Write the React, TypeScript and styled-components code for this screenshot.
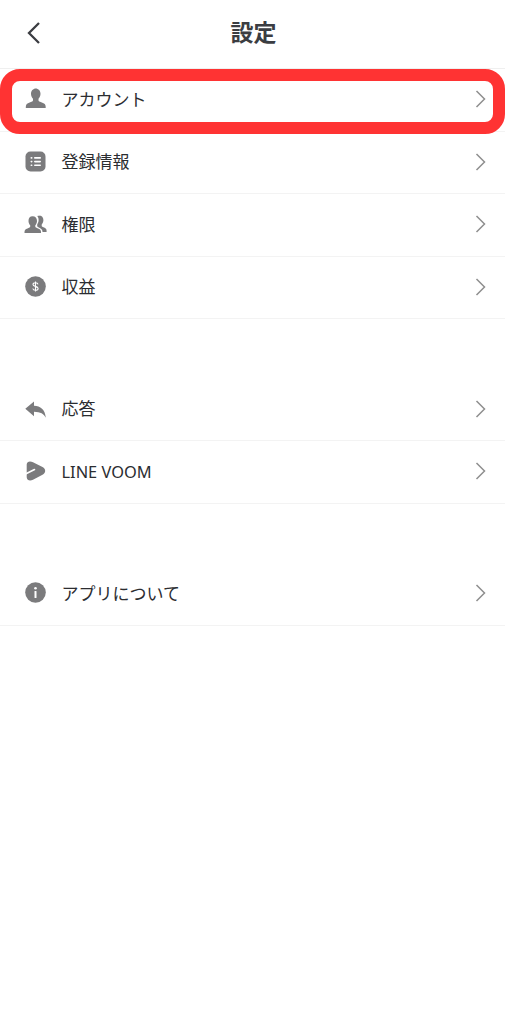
import React from "react";
import styled, { createGlobalStyle } from "styled-components";

const Global = createGlobalStyle`
  html, body { margin: 0; padding: 0; background: #fff; }
  body { font-family: "Noto Sans CJK JP", "Noto Sans", sans-serif; }
`;

const Page = styled.div`
  position: relative;
  width: 505px;
  height: 1024px;
  background: #fff;
  overflow: hidden;
`;

const Header = styled.header`
  position: relative;
  height: 69px;
  display: flex;
  align-items: center;
  justify-content: center;
  border-bottom: 1px solid #efefef;
  box-sizing: border-box;
`;

const BackButton = styled.svg`
  position: absolute;
  left: 26px;
  top: 21px;
  width: 16px;
  height: 24px;
`;

const Title = styled.h1`
  margin: -5px 0 0 2px;
  font-size: 23px;
  font-weight: 700;
  color: #3b3d42;
  line-height: 1;
`;

const Group = styled.section<{ $gap?: number }>`
  margin-top: ${(p) => p.$gap ?? 0}px;
`;

const Row = styled.div`
  height: 62.5px;
  box-sizing: border-box;
  display: flex;
  align-items: center;
  padding: 0 19px 0 25px;
  border-bottom: 1px solid #f3f3f3;
`;

const IconBox = styled.svg`
  width: 21px;
  height: 21px;
  flex: none;
  color: #7b7b7d;
  margin-bottom: 2px;
  overflow: visible;
`;

const Label = styled.span`
  margin: 0 0 3px 15.5px;
  flex: 1;
  font-size: 17px;
  line-height: 1;
  color: #2b2d31;
  font-weight: 400;
`;

const LatinLabel = styled(Label)`
  font-family: "Noto Sans", sans-serif;
  font-size: 16.4px;
  margin-bottom: 0;
`;

const Chevron = styled.svg`
  width: 11px;
  height: 18px;
  flex: none;
  margin-bottom: 1px;
`;

const Highlight = styled.div`
  position: absolute;
  left: 0;
  top: 68.5px;
  width: 505px;
  height: 65.5px;
  box-sizing: border-box;
  border: 12.5px solid #ff3333;
  border-radius: 20px;
  pointer-events: none;
`;

const Arrow = () => (
  <Chevron viewBox="0 0 11 18" fill="none" stroke="#8e8e8e" strokeWidth="1.5">
    <path d="M1.5 1l8 8-8 8" />
  </Chevron>
);

const Person = () => (
  <IconBox viewBox="0 0 21 21" fill="currentColor">
    <path d="M10.5 0.5c3 0 5 2.3 5 5.3 0 2-.8 3.8-2 5v1.4c0 .8 .6 1.2 1.5 1.600 2.500 .9 5 1.700 5.500 3.600.2 .9 .2 1.700 .2 2.600H.8c0-.9 0-1.700 .2-2.600.5-1.900 3-2.700 5.500-3.600.9-.4 1.500-.8 1.500-1.600V10.800c-1.200-1.200-2-3-2-5 0-3 2-5.300 5-5.300z" />
  </IconBox>
);

const ListIcon = () => (
  <IconBox viewBox="0 0 21 21">
    <rect x="0.500" y="0.500" width="20" height="20" rx="5" fill="currentColor" />
    <g fill="#fff">
      <rect x="5.500" y="6" width="2" height="1.700" rx=".8" />
      <rect x="5.500" y="9.700" width="2" height="1.700" rx=".8" />
      <rect x="5.500" y="13.400" width="2" height="1.700" rx=".8" />
      <rect x="9" y="6" width="7" height="1.700" rx=".8" />
      <rect x="9" y="9.700" width="7" height="1.700" rx=".8" />
      <rect x="9" y="13.400" width="7" height="1.700" rx=".8" />
    </g>
  </IconBox>
);

const People = () => (
  <IconBox viewBox="0 -1.500 21 21" fill="currentColor">
    <path d="M14 1c2.800 0 4.400 2 4.400 4.600 0 1.800-.7 3.300-1.700 4.400v1.300c0 .7 .5 1 1.200 1.300 1.500 .6 3.100 1.200 3.500 2.500.2 .8 .2 1.500 .2 2.400h-4.100c0-1.900-.8-3-2.300-3.800l-2.300-1.100c-.5-.3-.7-.6-.7-1V9.900c.9-1.200 1.400-2.700 1.400-4.300 0-1.600-.5-3-1.400-4 .7-.4 1.500-.6 2.300-.6z" />
    <path d="M7.600 1.800c2.700 0 4.400 2 4.400 4.600 0 1.700-.7 3.200-1.700 4.300v1.200c0 .7 .5 1 1.200 1.400 2.100 1 3.900 1.600 4.300 3 .2 .7 .2 1.300 .2 2.200H-.5c0-.9 0-1.500 .2-2.200 .4-1.400 2.200-2 4.300-3 .7-.4 1.200-.7 1.200-1.400v-1.200c-1-1.100-1.700-2.600-1.700-4.300 0-2.600 1.300-4.600 4.100-4.600z" />
  </IconBox>
);

const Dollar = () => (
  <IconBox viewBox="0 0 21 21">
    <circle cx="10.500" cy="10.500" r="10.300" fill="currentColor" />
    <path
      d="M13 8.300c-.2-1-1.200-1.600-2.500-1.600-1.400 0-2.500 .7-2.500 1.800 0 2.500 5.100 1.300 5.100 3.900 0 1.200-1.100 1.900-2.600 1.900-1.400 0-2.500-.7-2.700-1.800M10.500 5.400v10.200"
      fill="none"
      stroke="#fff"
      strokeWidth="1.100"
    />
  </IconBox>
);

const Reply = () => (
  <IconBox viewBox="0 -1 21 21" fill="currentColor">
    <path d="M9 2.500v4.300c6.500 .2 11 3.500 11.800 12-1.800-3.800-5.300-5.900-11.800-6v4.500L.3 9.800z" />
  </IconBox>
);

const Voom = () => (
  <IconBox viewBox="0 -1 21 21">
    <path
      d="M5 0.500c1 0 2 .3 3 .8l9.500 4.600c3.600 1.800 3.600 6 0 7.800l-9.500 5c-3 1.500-6 .8-6.300-2.500V3.500C1.800 1.700 3.200 .5 5 .5z"
      fill="currentColor"
    />
    <path d="M1 12.800l8.500-4.300" fill="none" stroke="#fff" strokeWidth="1.600" strokeLinecap="round" />
  </IconBox>
);

const Info = () => (
  <IconBox viewBox="0 0 21 21">
    <circle cx="10.500" cy="10.500" r="10.300" fill="currentColor" />
    <circle cx="10.500" cy="6.300" r="1.300" fill="#fff" />
    <rect x="9.500" y="9" width="2" height="7" rx=".6" fill="#fff" />
  </IconBox>
);

export default function App() {
  return (
    <Page>
      <Global />
      <Header>
        <BackButton viewBox="0 0 16 24" fill="none" stroke="#3b3d42" strokeWidth="2.300">
          <path d="M13 2L3 12l10 10" />
        </BackButton>
        <Title>設定</Title>
      </Header>
      <Group>
        <Row><Person /><Label>アカウント</Label><Arrow /></Row>
        <Row><ListIcon /><Label>登録情報</Label><Arrow /></Row>
        <Row><People /><Label>権限</Label><Arrow /></Row>
        <Row><Dollar /><Label>収益</Label><Arrow /></Row>
      </Group>
      <Group $gap={59.5}>
        <Row><Reply /><Label>応答</Label><Arrow /></Row>
        <Row><Voom /><LatinLabel>LINE VOOM</LatinLabel><Arrow /></Row>
      </Group>
      <Group $gap={59.5}>
        <Row><Info /><Label>アプリについて</Label><Arrow /></Row>
      </Group>
      <Highlight />
    </Page>
  );
}
